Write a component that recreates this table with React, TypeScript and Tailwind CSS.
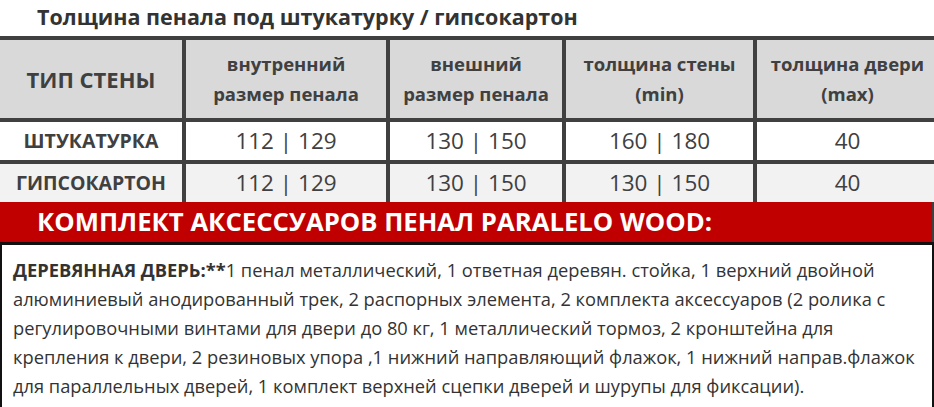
import React from 'react';

const headers = [
  ['ТИП СТЕНЫ'],
  ['внутренний', 'размер пенала'],
  ['внешний', 'размер пенала'],
  ['толщина стены', '(min)'],
  ['толщина двери', '(max)'],
];

const rows = [
  { name: 'ШТУКАТУРКА', bg: 'bg-white', cells: ['112 | 129', '130 | 150', '160 | 180', '40'] },
  { name: 'ГИПСОКАРТОН', bg: 'bg-[#f2f2f2]', cells: ['112 | 129', '130 | 150', '130 | 150', '40'] },
];

const lines = [
  '1 пенал металлический, 1 ответная деревян. стойка, 1 верхний двойной',
  'алюминиевый анодированный трек, 2 распорных элемента, 2 комплекта аксессуаров (2 ролика с',
  'регулировочными винтами для двери до 80 кг, 1 металлический тормоз, 2 кронштейна для',
  'крепления к двери, 2 резиновых упора ,1 нижний направляющий флажок, 1 нижний направ.флажок',
  'для параллельных дверей, 1 комплект верхней сцепки дверей и шурупы для фиксации).',
];

const App: React.FC = () => {
  return (
    <div className="w-[934px] h-[407px] overflow-hidden bg-white font-['Open_Sans',sans-serif] text-[#3a3a3a]">
      {/* Title */}
      <div className="h-[36px] pl-[37px] pt-[3px] text-[21.5px] font-bold leading-[28px] text-[#333] whitespace-nowrap">
        Толщина пенала под штукатурку / гипсокартон
      </div>

      {/* Table */}
      <div className="grid grid-cols-[182px_200px_172px_187px_181px] gap-[4px] bg-[#404040] pt-[4px] pr-[4px]">
        {headers.map((h, i) => (
          <div
            key={i}
            className={`bg-[#d9d9d9] h-[78px] flex flex-col items-center justify-center font-bold text-[#404040] whitespace-nowrap ${
              i === 0 ? 'text-[22px]' : 'text-[18.5px] leading-[30px]'
            }`}
          >
            {h.map((t) => (
              <span key={t}>{t}</span>
            ))}
          </div>
        ))}
        {rows.map((r) => (
          <React.Fragment key={r.name}>
            <div className={`${r.bg} h-[38px] flex items-center justify-center font-bold text-[19.5px] text-[#404040] whitespace-nowrap`}>
              {r.name}
            </div>
            {r.cells.map((c, j) => (
              <div key={j} className={`${r.bg} h-[38px] flex items-center justify-center text-[22.5px] text-[#404040] whitespace-nowrap`}>
                {c}
              </div>
            ))}
          </React.Fragment>
        ))}
      </div>

      {/* Red band */}
      <div className="h-[40px] bg-[#c00000] border-r-[2px] border-[#404040] pl-[37px] flex items-center text-[25.7px] font-bold text-white whitespace-nowrap">
        КОМПЛЕКТ АКСЕССУАРОВ ПЕНАЛ PARALELO WOOD:
      </div>

      {/* Body */}
      <div className="border-t-[3px] border-x-[2px] border-[#111] h-[170px] pl-[11px] pt-[10px] text-[18.3px] leading-[29px] text-[#333]">
        {lines.map((l, i) => (
          <div key={i} className="whitespace-nowrap">
            {i === 0 && <span className="font-bold"> ДЕРЕВЯННАЯ ДВЕРЬ:**</span>}
            {l}
          </div>
        ))}
      </div>
    </div>
  );
};

export default App;
